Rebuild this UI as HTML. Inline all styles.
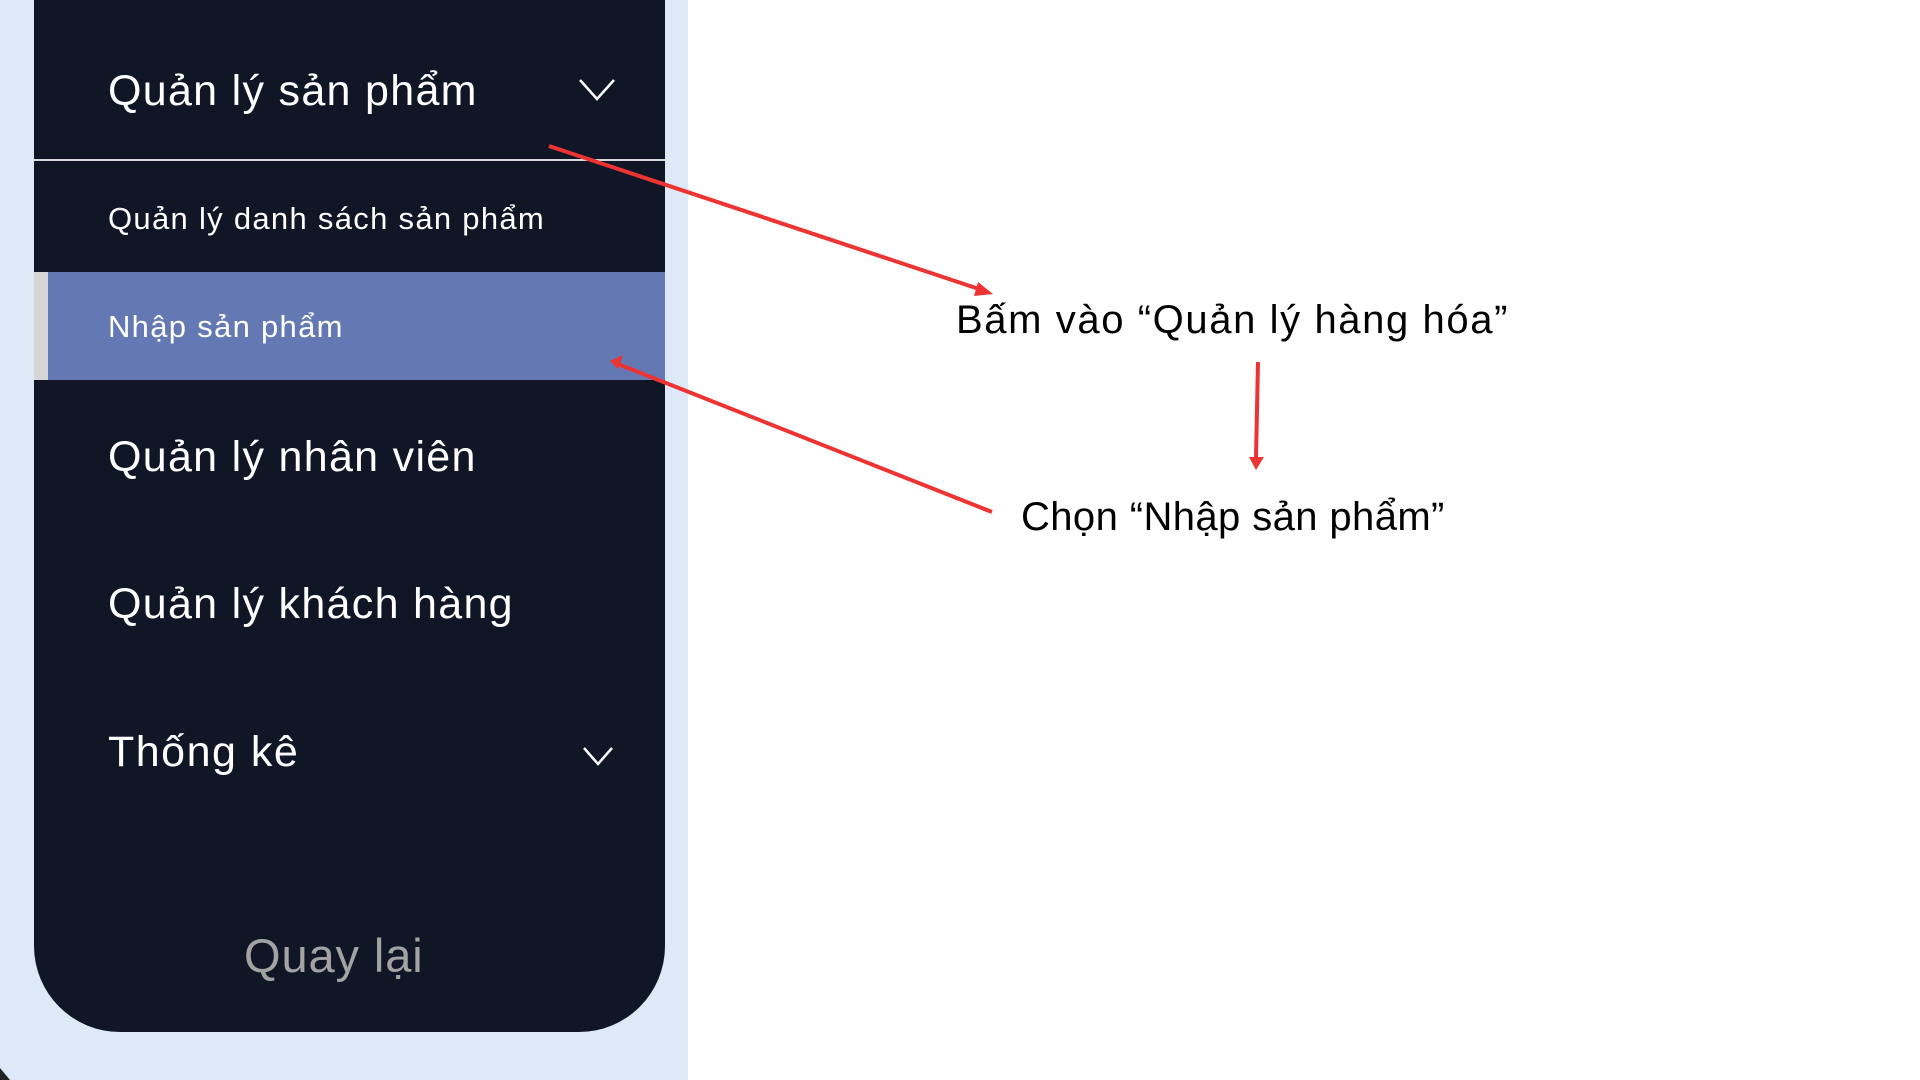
<!DOCTYPE html>
<html><head><meta charset="utf-8"><style>
html,body{margin:0;padding:0;width:1920px;height:1080px;overflow:hidden;background:#fff;font-family:"Liberation Sans","DejaVu Sans",sans-serif;}
.bg{position:absolute;left:0;top:0;width:688px;height:1080px;background:#dde9f7;}
.panel{position:absolute;left:34px;top:-20px;width:631px;height:1052px;background:#111626;border-radius:0 0 86px 86px;overflow:hidden;}
.t{position:absolute;color:#fff;white-space:nowrap;line-height:1;letter-spacing:1.3px;}
.hl{position:absolute;left:0;top:292px;width:631px;height:108px;background:#6479b3;}
.bar{position:absolute;left:0;top:292px;width:14px;height:108px;background:#d6d6d6;}
.div{position:absolute;left:0;top:179px;width:631px;height:2px;background:#d8d8d8;}
.ann{position:absolute;color:#000;font-size:40px;white-space:nowrap;line-height:1;}
</style></head><body>
<div class="bg"></div>
<div class="panel">
  <div class="t" style="left:74px;top:90px;font-size:43px;">Quản lý sản phẩm</div>
  <div class="div"></div>
  <div class="t" style="left:74px;top:223px;font-size:31px;">Quản lý danh sách sản phẩm</div>
  <div class="hl"></div><div class="bar"></div>
  <div class="t" style="left:74px;top:331px;font-size:31px;">Nhập sản phẩm</div>
  <div class="t" style="left:74px;top:456px;font-size:43px;">Quản lý nhân viên</div>
  <div class="t" style="left:74px;top:603px;font-size:43px;">Quản lý khách hàng</div>
  <div class="t" style="left:74px;top:751px;font-size:43px;letter-spacing:1.5px;">Thống kê</div>
  <div class="t" style="left:210px;top:952px;font-size:47px;color:#a3a3a3;letter-spacing:0.9px;">Quay lại</div>
</div>
<svg style="position:absolute;left:0;top:0" width="1920" height="1080">
  <polyline points="580,80 597,99 614,80" fill="none" stroke="#fff" stroke-width="2.5"/>
  <polyline points="584,748 598,764 612,748" fill="none" stroke="#fff" stroke-width="2.5"/>
  <path d="M0,1068 L10,1080 L0,1080 Z" fill="#222"/>
  <g stroke="#ee3333" stroke-width="4" fill="#ee3333">
    <line x1="549" y1="146" x2="985" y2="291"/>
    <path d="M993,294 L978,282 L974,296 Z" stroke="none"/>
    <line x1="992" y1="512" x2="618" y2="364"/>
    <path d="M610,361 L623,355 L618,369 Z" stroke="none"/>
    <line x1="1258" y1="362" x2="1256" y2="458"/>
    <path d="M1249,457 L1264,457 L1256,470 Z" stroke="none"/>
  </g>
</svg>
<div class="ann" style="left:956px;top:300px;letter-spacing:1.6px;">Bấm vào “Quản lý hàng hóa”</div>
<div class="ann" style="left:1021px;top:497px;letter-spacing:0.4px;">Chọn “Nhập sản phẩm”</div>
</body></html>
